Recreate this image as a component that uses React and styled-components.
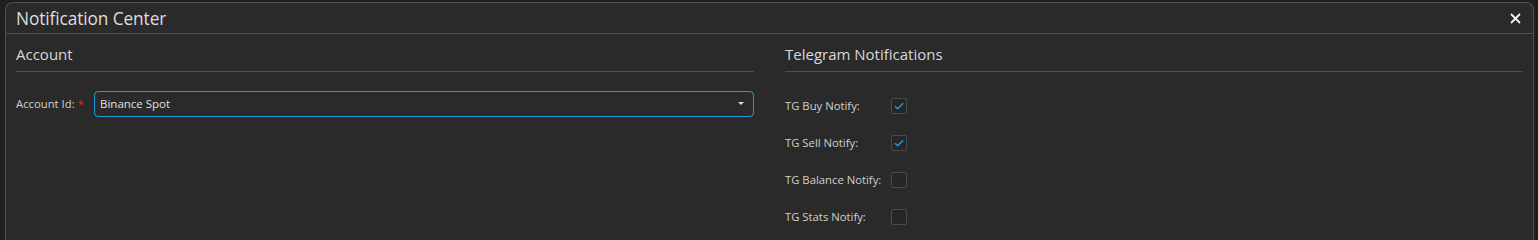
import React from "react";
import styled, { createGlobalStyle } from "styled-components";

const Global = createGlobalStyle`
  html, body { margin: 0; padding: 0; background: #1f1f1f; height: 240px; overflow: hidden; }
  body { font-family: "Segoe UI", "Open Sans", "Noto Sans", sans-serif; color: #d6d6d6; }
`;

const Dialog = styled.div`
  margin: 2px 4px 0 5px;
  height: 238px;
  overflow: hidden;
  background: #2a2a2a;
  border: 1px solid #505050;
  border-bottom: 0;
  border-radius: 8px 8px 0 0;
  box-sizing: border-box;
`;

const Header = styled.div`
  height: 30px;
  display: flex;
  align-items: center;
  justify-content: space-between;
  padding: 0 11px 0 10px;
  border-bottom: 1px solid #4e4e4e;
`;

const Title = styled.div`
  font-size: 17.3px;
  color: #dedede;
  letter-spacing: -0.1px;
`;

const Close = styled.button`
  background: none;
  border: 0;
  padding: 0;
  width: 14px;
  height: 14px;
  display: flex;
  align-items: center;
  justify-content: center;
  cursor: pointer;
`;

const Body = styled.div`
  display: grid;
  grid-template-columns: 1fr 1fr;
  column-gap: 31px;
  padding: 0 10px;
`;

const Section = styled.div`
  display: flex;
  flex-direction: column;
`;

const SectionTitle = styled.div`
  font-size: 15px;
  color: #d8d8d8;
  height: 38px;
  display: flex;
  align-items: center;
  padding-top: 3px;
  box-sizing: border-box;
  border-bottom: 1px solid #4e4e4e;
`;

const Row = styled.div`
  display: flex;
  align-items: center;
  height: ${(p) => p.$h || 37}px;
  margin-top: ${(p) => p.$mt || 0}px;
`;

const Label = styled.div`
  font-size: 11.3px;
  color: #d0d0d0;
  width: ${(p) => p.$w}px;
  flex-shrink: 0;
  white-space: nowrap;
`;

const Req = styled.span`
  color: #d03030;
  margin-left: 3px;
`;

const Select = styled.div`
  flex: 1;
  height: 26px;
  box-sizing: border-box;
  border: 1px solid #1b9ad6;
  border-radius: 4px;
  display: flex;
  align-items: center;
  justify-content: space-between;
  padding: 0 9px 0 5px;
  font-size: 11.5px;
  color: #e0e0e0;
`;

const Caret = styled.span`
  width: 0;
  height: 0;
  border-left: 3.5px solid transparent;
  border-right: 3.5px solid transparent;
  border-top: 3.5px solid #dcdcdc;
`;

const Check = styled.div`
  width: 16px;
  height: 16px;
  box-sizing: border-box;
  border: 1px solid #4a4a4a;
  border-radius: 2px;
  background: #262626;
  display: flex;
  align-items: center;
  justify-content: center;
`;

const Spacer = styled.div`
  height: ${(p) => p.$h}px;
`;

const Tick = () => (
  <svg width="10" height="8" viewBox="0 0 10 8">
    <path d="M1 4.2 L3.8 6.8 L9 1.2" fill="none" stroke="#1e9ee0" strokeWidth="1.4" />
  </svg>
);

const tg = [
  ["TG Buy Notify:", true],
  ["TG Sell Notify:", true],
  ["TG Balance Notify:", false],
  ["TG Stats Notify:", false],
];

export default function App() {
  return (
    <>
      <Global />
      <Dialog>
        <Header>
          <Title>Notification Center</Title>
          <Close aria-label="close">
            <svg width="11" height="11" viewBox="0 0 11 11">
              <path d="M1 1 L10 10 M10 1 L1 10" stroke="#f0f0f0" strokeWidth="1.8" />
            </svg>
          </Close>
        </Header>
        <Body>
          <Section>
            <SectionTitle>Account</SectionTitle>
            <Row $mt={13} $h={37}>
              <Label $w={78}>
                Account Id:<Req>*</Req>
              </Label>
              <Select>
                <span>Binance Spot</span>
                <Caret />
              </Select>
            </Row>
          </Section>
          <Section>
            <SectionTitle>Telegram Notifications</SectionTitle>
            <Spacer $h={15} />
            {tg.map(([l, c]) => (
              <Row key={l} $h={37}>
                <Label $w={106}>{l}</Label>
                <Check>{c && <Tick />}</Check>
              </Row>
            ))}
          </Section>
        </Body>
      </Dialog>
    </>
  );
}
